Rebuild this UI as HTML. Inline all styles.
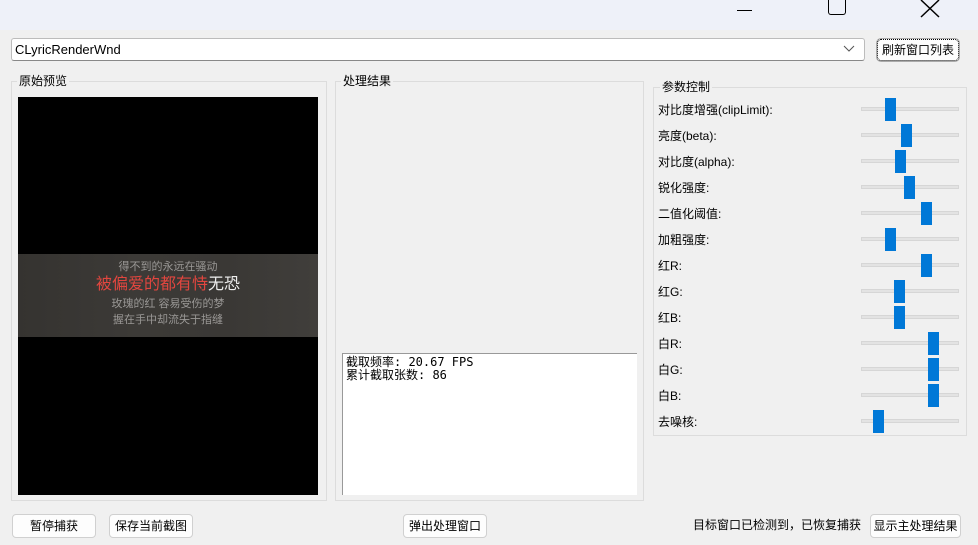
<!DOCTYPE html><html><head><meta charset="utf-8"><style>
*{margin:0;padding:0;box-sizing:border-box}
body{width:978px;height:545px;overflow:hidden;background:#f0f0f0;font-family:"Liberation Sans","Noto Sans CJK SC",sans-serif;font-size:12px;color:#000;position:relative}
.a{position:absolute}
.gb{position:absolute;border:1px solid #dcdcdc}
.gl{position:absolute;background:#f0f0f0;padding:0 2px;font-size:12px;line-height:14px}
.btn{position:absolute;background:#fdfdfd;border:1px solid #d0d0d0;border-radius:4px;text-align:center;font-size:12px;line-height:22px}
.lbl{position:absolute;left:658px;font-size:12px;line-height:14px}
.tr{position:absolute;left:861px;width:98px;height:4px;background:#e3e3e3;border:1px solid #d6d6d6}
.th{position:absolute;width:11px;height:23px;background:#0078d7}
</style></head><body>
<div class="a" style="left:0;top:0;width:978px;height:30px;background:#eef1f9"></div>
<div class="a" style="left:737px;top:10px;width:15px;height:1px;background:#000"></div>
<div class="a" style="left:828px;top:-2px;width:18px;height:17px;border:1.5px solid #000;border-top:none;border-radius:0 0 3px 3px"></div>
<svg class="a" style="left:918px;top:0" width="24" height="18"><path d="M3 0L21 17M21 0L3 17" stroke="#000" stroke-width="1.5"/></svg>
<div class="a" style="left:11px;top:38px;width:854px;height:23px;background:#fff;border:1px solid #bcbcbc;border-bottom:1px solid #888;border-radius:3px;line-height:21px;padding-left:3px;font-size:13px">CLyricRenderWnd</div>
<svg class="a" style="left:843px;top:45px" width="12" height="8"><path d="M1 1L6 6L11 1" stroke="#555" fill="none"/></svg>
<div class="btn" style="left:877px;top:39px;width:82px;height:22px;border:1px dotted #000;box-shadow:0 0 0 1px #aaa;line-height:20px">刷新窗口列表</div>
<div class="gb" style="left:11px;top:81px;width:316px;height:420px"></div>
<div class="gl" style="left:17px;top:74px">原始预览</div>
<div class="a" style="left:18px;top:97px;width:300px;height:398px;background:#000"></div>
<div class="a" style="left:18px;top:254px;width:300px;height:83px;background:linear-gradient(90deg,#353330,#3c3a37 40%,#3a3835 70%,#403e3b);text-align:center;color:#9a9896">
<div style="margin-top:6px;font-size:11px;line-height:14px">得不到的永远在骚动</div>
<div style="font-size:16px;line-height:22px;color:#e2463f">被偏爱的都有恃<span style="color:#eee">无恐</span></div>
<div style="font-size:11px;line-height:16px">玫瑰的红 容易受伤的梦</div>
<div style="font-size:11px;line-height:16px">握在手中却流失于指缝</div></div>
<div class="gb" style="left:335px;top:81px;width:309px;height:420px"></div>
<div class="gl" style="left:341px;top:74px">处理结果</div>
<div class="a" style="left:342px;top:353px;width:295px;height:142px;background:#fff;border-top:1px solid #999;border-left:1px solid #999;font-family:'WenQuanYi Zen Hei',monospace;font-size:12px;line-height:13px;padding:2px 0 0 3px">截取频率: 20.67 FPS<br>累计截取张数: 86</div>
<div class="gb" style="left:653px;top:87px;width:314px;height:349px"></div>
<div class="gl" style="left:660px;top:80px">参数控制</div>
<div class="lbl" style="top:103px">对比度增强(clipLimit):</div>
<div class="lbl" style="top:129px">亮度(beta):</div>
<div class="lbl" style="top:155px">对比度(alpha):</div>
<div class="lbl" style="top:181px">锐化强度:</div>
<div class="lbl" style="top:207px">二值化阈值:</div>
<div class="lbl" style="top:233px">加粗强度:</div>
<div class="lbl" style="top:259px">红R:</div>
<div class="lbl" style="top:285px">红G:</div>
<div class="lbl" style="top:311px">红B:</div>
<div class="lbl" style="top:337px">白R:</div>
<div class="lbl" style="top:363px">白G:</div>
<div class="lbl" style="top:389px">白B:</div>
<div class="lbl" style="top:415px">去噪核:</div>
<div class="tr" style="top:107px"></div><div class="th" style="left:885px;top:98px"></div>
<div class="tr" style="top:133px"></div><div class="th" style="left:901px;top:124px"></div>
<div class="tr" style="top:159px"></div><div class="th" style="left:895px;top:150px"></div>
<div class="tr" style="top:185px"></div><div class="th" style="left:904px;top:176px"></div>
<div class="tr" style="top:211px"></div><div class="th" style="left:921px;top:202px"></div>
<div class="tr" style="top:237px"></div><div class="th" style="left:885px;top:228px"></div>
<div class="tr" style="top:263px"></div><div class="th" style="left:921px;top:254px"></div>
<div class="tr" style="top:289px"></div><div class="th" style="left:894px;top:280px"></div>
<div class="tr" style="top:315px"></div><div class="th" style="left:894px;top:306px"></div>
<div class="tr" style="top:341px"></div><div class="th" style="left:928px;top:332px"></div>
<div class="tr" style="top:367px"></div><div class="th" style="left:928px;top:358px"></div>
<div class="tr" style="top:393px"></div><div class="th" style="left:928px;top:384px"></div>
<div class="tr" style="top:419px"></div><div class="th" style="left:873px;top:410px"></div>
<div class="btn" style="left:12px;top:514px;width:84px;height:24px">暂停捕获</div>
<div class="btn" style="left:109px;top:514px;width:84px;height:24px">保存当前截图</div>
<div class="btn" style="left:403px;top:514px;width:84px;height:24px">弹出处理窗口</div>
<div class="a" style="left:693px;top:518px;line-height:14px">目标窗口已检测到，已恢复捕获</div>
<div class="btn" style="left:870px;top:514px;width:91px;height:24px">显示主处理结果</div>
</body></html>
